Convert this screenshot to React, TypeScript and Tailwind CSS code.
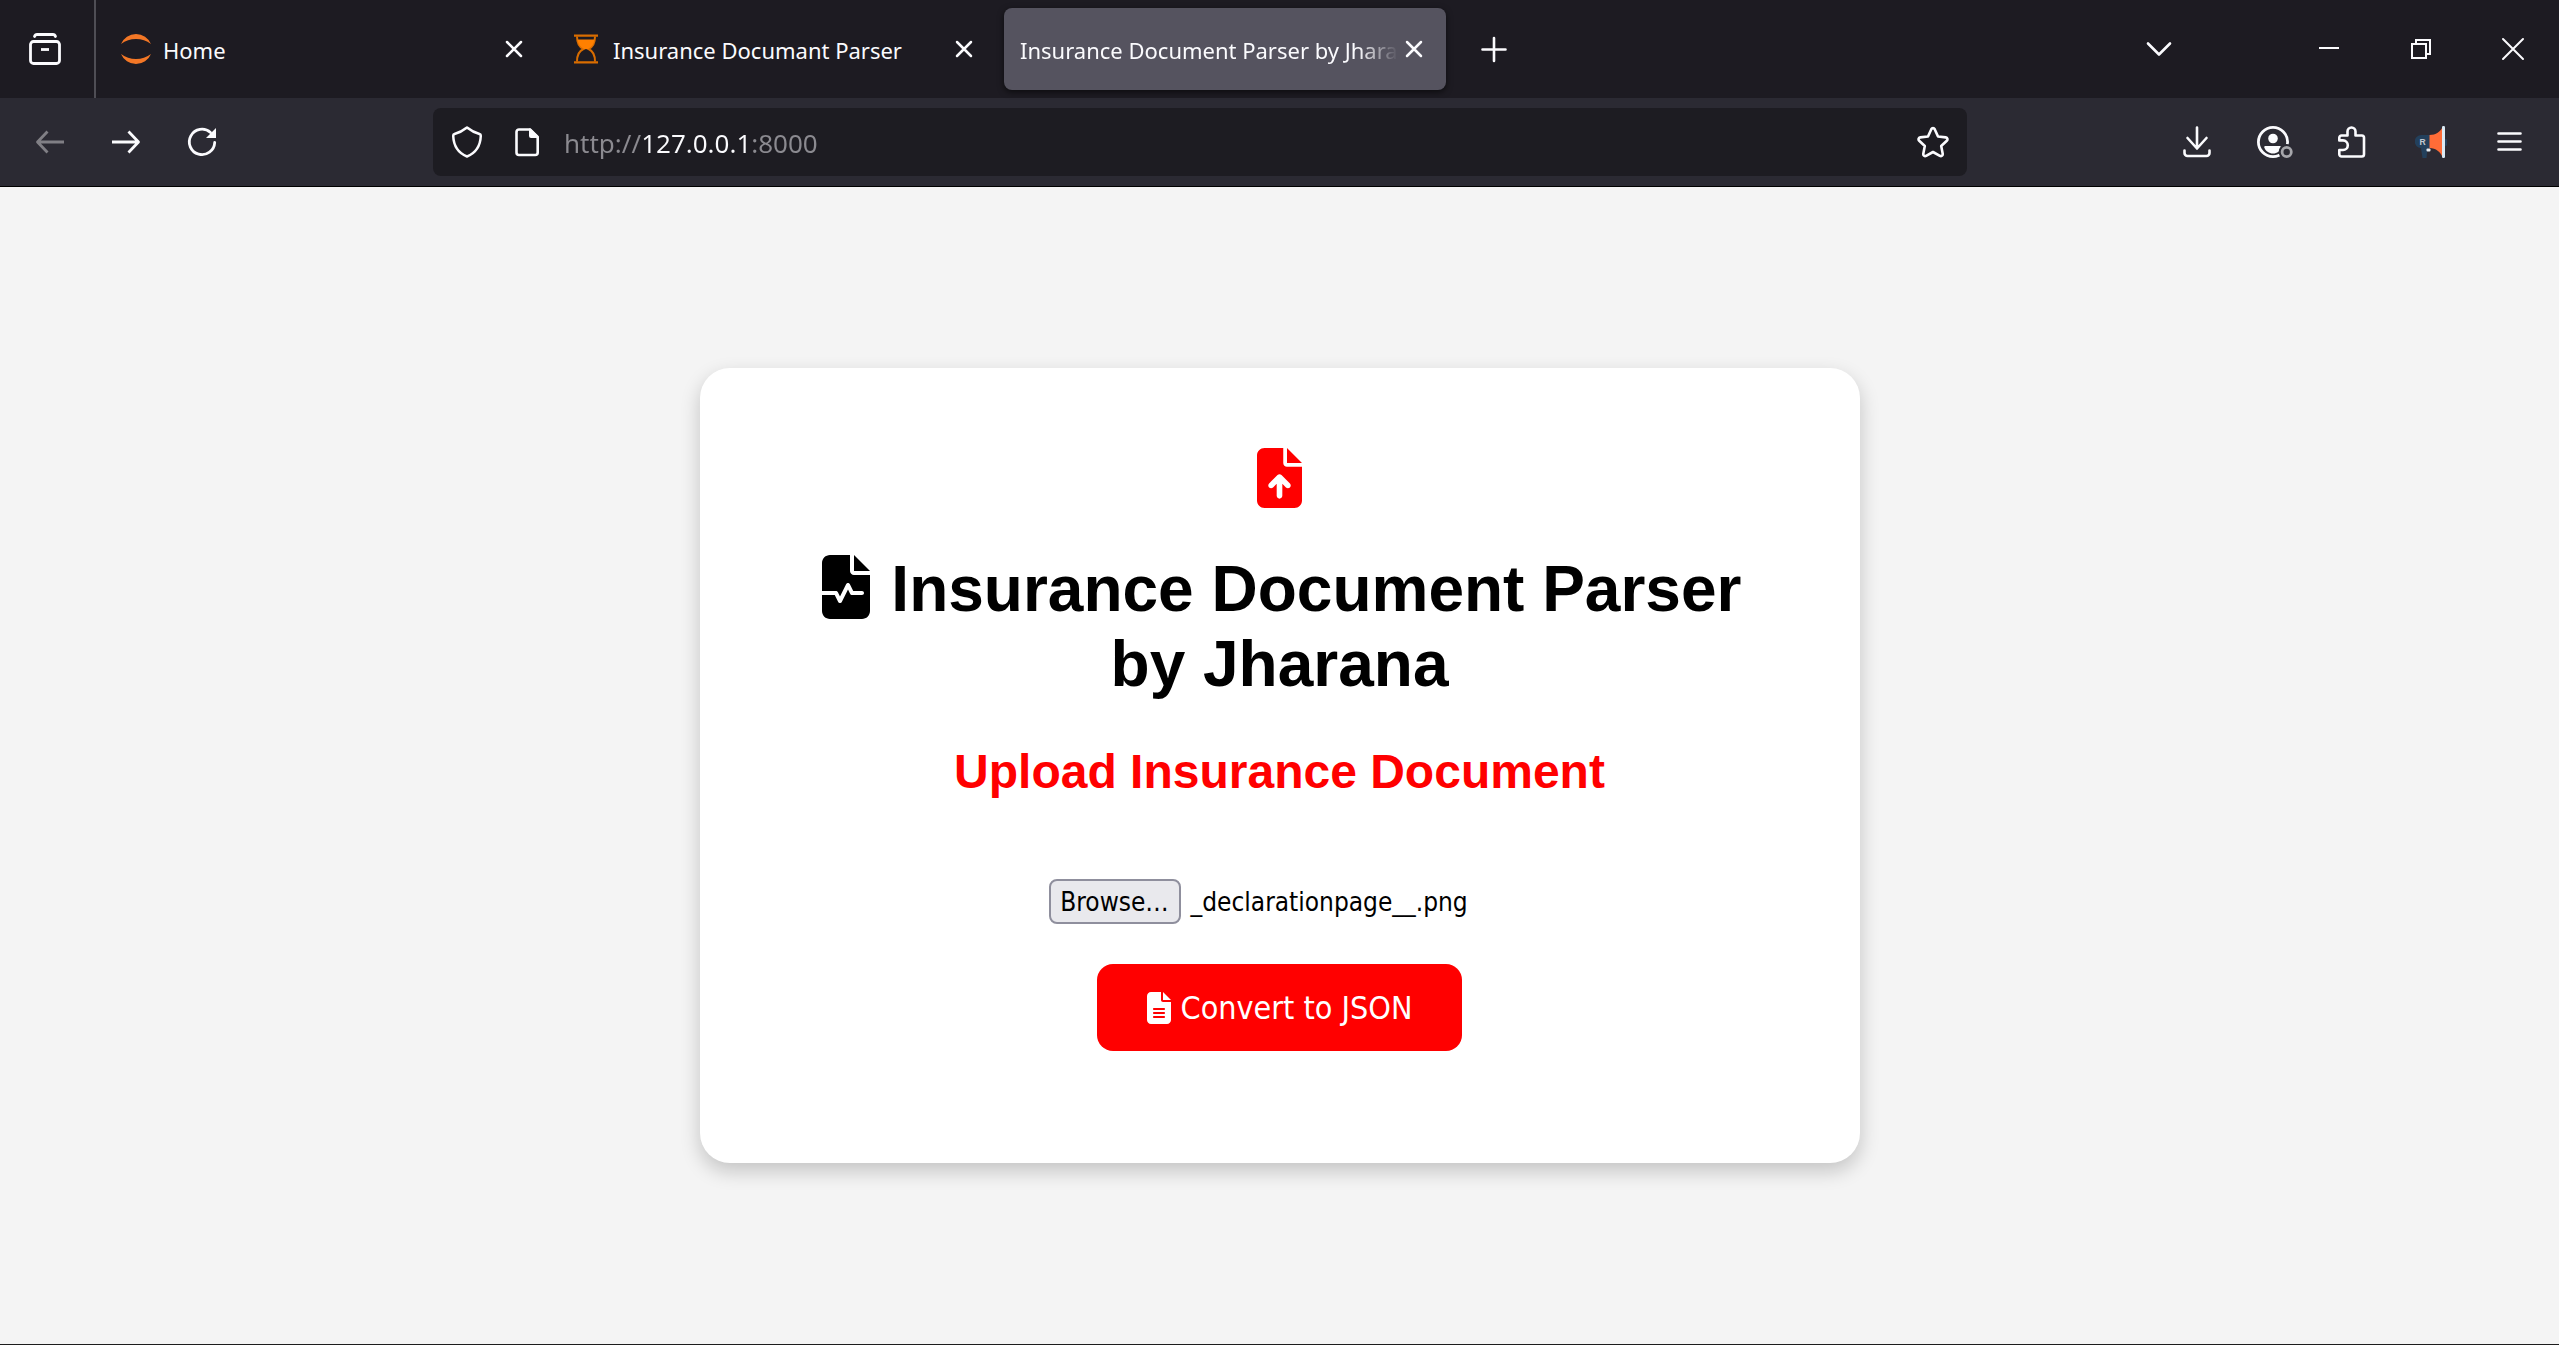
import type { ReactNode } from "react";
import { FaFileArrowUp, FaFileLines, FaFileWaveform } from "react-icons/fa6";

function Glyph({ children, className = "size-8" }: { children: ReactNode; className?: string }) {
  return (
    <svg
      viewBox="0 0 32 32"
      className={`${className} shrink-0`}
      fill="none"
      stroke="currentColor"
      strokeWidth="2.8"
      strokeLinecap="round"
      strokeLinejoin="round"
      aria-hidden="true"
    >
      {children}
    </svg>
  );
}

function CloseGlyph() {
  return (
    <Glyph>
      <path d="M9 9l14 14M23 9L9 23" strokeWidth="2.5" />
    </Glyph>
  );
}

function JupyterIcon() {
  return (
    <svg viewBox="0 0 32 32" className="size-8 shrink-0" fill="#f37726" aria-hidden="true">
      <path d="M1 11A16.2 16.2 0 0 1 31 11A25 25 0 0 0 1 11z" />
      <path d="M1 21A16.2 16.2 0 0 0 31 21A25 25 0 0 1 1 21z" />
    </svg>
  );
}

function HourglassIcon() {
  return (
    <svg viewBox="0 0 32 32" className="size-8 shrink-0" aria-hidden="true">
      <path d="M4 1.5h24v2.2H4zM4 28.3h24v2.2H4z" fill="#d96d00" />
      <path
        d="M7 3.5c0 7 2 10.500 6.500 12.500C9 18 7 22 7 28.500M25 3.500c0 7-2 10.500-6.500 12.500C23 18 25 22 25 28.500"
        fill="none"
        stroke="#d96d00"
        strokeWidth="2"
      />
      <path d="M7.500 6.500h17c-.5 4.500-2.500 7.500-6.500 9.500h-4c-4-2-6-5-6.500-9.500z" fill="#ff8000" />
    </svg>
  );
}

function MegaphoneIcon() {
  return (
    <svg viewBox="0 0 32 32" className="size-8 shrink-0" aria-hidden="true">
      <path d="M6.500 9H15v13h-2.500L11.500 32H7.500L6 22A6.500 6.500 0 0 1 6.500 9z" fill="#23405c" />
      <path d="M30 13a3.500 3.500 0 0 1 0 7z" fill="#23405c" />
      <path d="M14.500 9C21 9 25.500 5.500 27.500 1v30C25.500 26 21 22 14.500 22z" fill="#ff6c37" />
      <rect x="27" y="0" width="3" height="32" rx="1.200" fill="#dbe9f4" />
      <rect x="11.500" y="22.500" width="4" height="3" rx="1" fill="#e8eef4" />
      <text x="4.500" y="19" fontSize="8.500" fontWeight="700" fontFamily="Liberation Sans, sans-serif" fill="#c3c9d0">
        R
      </text>
    </svg>
  );
}

function Tab({ title, icon, active = false }: { title: string; icon?: ReactNode; active?: boolean }) {
  return (
    <div
      role="tab"
      aria-selected={active}
      className={
        active
          ? "flex h-[82px] w-[442px] min-w-0 items-center rounded-lg bg-[#55535f] pr-4 pl-4 shadow-[0_2px_6px_rgba(0,0,0,0.6)]"
          : "flex h-[82px] w-[442px] min-w-0 items-center rounded-lg pr-4 pl-4"
      }
    >
      {icon && <span className="mr-[11px]">{icon}</span>}
      <span
        className={
          active
            ? "min-w-0 flex-1 overflow-hidden pt-0.5 whitespace-nowrap [mask-image:linear-gradient(to_left,transparent,black_40px)]"
            : "min-w-0 flex-1 overflow-hidden pt-0.5 whitespace-nowrap"
        }
      >
        {title}
      </span>
      <button type="button" aria-label={`Close ${title}`}>
        <CloseGlyph />
      </button>
    </div>
  );
}

function ToolButton({ label, children, dim = false }: { label: string; children: ReactNode; dim?: boolean }) {
  return (
    <button
      type="button"
      aria-label={label}
      disabled={dim}
      className={
        dim
          ? "flex h-16 w-16 shrink-0 items-center justify-center text-[#807f85]"
          : "flex h-16 w-16 shrink-0 items-center justify-center"
      }
    >
      {children}
    </button>
  );
}

function WindowButton({ label, children }: { label: string; children: ReactNode }) {
  return (
    <button type="button" aria-label={label} className="flex h-full w-[92px] items-center justify-center">
      {children}
    </button>
  );
}

function TabStrip() {
  return (
    <div className="flex h-[98px] items-center bg-[#1d1b22] text-[22px] leading-8">
      <button
        type="button"
        aria-label="Recent browsing"
        className="flex h-full w-24 shrink-0 items-center justify-center border-r-2 border-[#4f4e55] pr-1"
      >
        <Glyph>
          <rect x="1.500" y="8.500" width="29" height="22" rx="3" />
          <path d="M5.500 3.500C6 2 7 1.500 8 1.500h16c1 0 2 .5 2.500 2" />
          <path d="M12 16.500h8" strokeLinecap="butt" />
        </Glyph>
      </button>
      <div role="tablist" className="ml-2 flex min-w-0 gap-2">
        <Tab title="Home" icon={<JupyterIcon />} />
        <Tab title="Insurance Documant Parser" icon={<HourglassIcon />} />
        <Tab title="Insurance Document Parser by Jharana" active />
      </div>
      <button type="button" aria-label="New tab" className="ml-4 flex h-16 w-16 shrink-0 items-center justify-center">
        <Glyph>
          <path d="M16 5v23M4.500 16.500h23" strokeWidth="2.600" />
        </Glyph>
      </button>
      <div className="ml-auto flex h-full shrink-0 items-center">
        <button type="button" aria-label="List all tabs" className="mr-[92px] flex h-16 w-16 items-center justify-center">
          <Glyph>
            <path d="M5 10.500l11 11 11-11" strokeWidth="2.600" />
          </Glyph>
        </button>
        <WindowButton label="Minimize">
          <Glyph>
            <path d="M6 15h20" strokeWidth="2" strokeLinecap="butt" />
          </Glyph>
        </WindowButton>
        <WindowButton label="Restore">
          <Glyph>
            <path d="M7 11h14v14H7zM11 11V7h14v14h-4" strokeWidth="2" strokeLinejoin="miter" strokeLinecap="butt" />
          </Glyph>
        </WindowButton>
        <WindowButton label="Close">
          <Glyph>
            <path d="M6 6l20 20M26 6L6 26" strokeWidth="2" />
          </Glyph>
        </WindowButton>
      </div>
    </div>
  );
}

function NavBar() {
  return (
    <div className="flex h-[89px] items-center border-b border-black bg-[#2b2a33] px-[18px]">
      <div className="flex shrink-0 gap-3">
        <ToolButton label="Back" dim>
          <Glyph>
            <path d="M30 16H3.500M13.500 5.500L3.500 16l10 10.500" strokeLinecap="butt" />
          </Glyph>
        </ToolButton>
        <ToolButton label="Forward">
          <Glyph>
            <path d="M2 16h26.500M18.500 5.500L28.500 16l-10 10.500" strokeLinecap="butt" />
          </Glyph>
        </ToolButton>
        <ToolButton label="Reload">
          <Glyph>
            <path d="M28.700 16.500A12.700 12.700 0 1 1 24.500 6.500" />
            <path d="M30 2v10H20z" fill="currentColor" stroke="none" />
          </Glyph>
        </ToolButton>
      </div>
      <div className="w-[199px]" />
      <div className="flex h-[68px] min-w-0 flex-1 items-center rounded-lg bg-[#1d1c22] px-[18px]">
        <button type="button" aria-label="Tracking protection">
          <Glyph>
            <path
              d="M16 1.500C12.500 4.300 8 6.700 3.500 8c-.9.3-1.300.9-1.300 1.800C2.600 19.500 7 27 16 30.500c9-3.500 13.400-11 13.800-20.700 0-.9-.4-1.500-1.300-1.800C24 6.700 19.500 4.300 16 1.500z"
              strokeWidth="2.500"
            />
          </Glyph>
        </button>
        <button type="button" aria-label="Site information" className="ml-7">
          <Glyph>
            <path d="M8 3.500h11L26.700 11v15.500a2.500 2.500 0 0 1-2.500 2.500H8a2.500 2.500 0 0 1-2.500-2.500V6A2.500 2.500 0 0 1 8 3.500z" strokeWidth="2.600" />
            <path d="M18 2.500h1.500l8 8V12H20a2 2 0 0 1-2-2z" fill="currentColor" stroke="none" />
          </Glyph>
        </button>
        <input
          type="text"
          aria-label="Address"
          defaultValue="http://127.0.0.1:8000"
          spellCheck={false}
          className="ml-[21px] min-w-0 flex-1 bg-[linear-gradient(to_right,#8b8a90_80px,#fbfbfe_80px_187px,#8b8a90_187px)] bg-clip-text pt-0.5 text-[26px] leading-9 text-transparent caret-white outline-none"
        />
        <button type="button" aria-label="Bookmark this page">
          <Glyph>
            <path
              d="M14.300 3.200a1.900 1.900 0 0 1 3.400 0L21 10.500l7.800.9a1.900 1.900 0 0 1 1 3.300L24.200 20l1.500 7.800a1.900 1.900 0 0 1-2.800 2L16 26l-6.900 3.800a1.900 1.900 0 0 1-2.800-2L7.800 20 2.200 14.700a1.900 1.900 0 0 1 1-3.300L11 10.500z"
              strokeWidth="2.600"
            />
          </Glyph>
        </button>
      </div>
      <div className="w-[198px]" />
      <div className="flex shrink-0 gap-[14px]">
        <ToolButton label="Downloads">
          <Glyph>
            <path d="M16 1.500V22M6.500 12L16 22.500 25.500 12M3.500 24.500v2.500a3 3 0 0 0 3 3h19a3 3 0 0 0 3-3v-2.500" strokeWidth="2.600" />
          </Glyph>
        </ToolButton>
        <ToolButton label="Account">
          <svg viewBox="0 0 36 32" className="h-8 w-9" fill="none" aria-hidden="true">
            <circle cx="16" cy="16" r="14.600" stroke="currentColor" strokeWidth="2.800" />
            <circle cx="16" cy="12.500" r="4.800" fill="currentColor" />
            <path d="M8.500 20h15c1 0 1.500.6 1.200 1.500C23.500 25 20 27.500 16 27.500S8.500 25 7.300 21.500C7 20.600 7.500 20 8.500 20z" fill="currentColor" />
            <circle cx="29.700" cy="26" r="8" fill="#2b2a33" />
            <circle cx="29.700" cy="26" r="4.600" stroke="#a6a6ab" strokeWidth="2.800" />
          </svg>
        </ToolButton>
        <ToolButton label="Extensions">
          <Glyph>
            <path
              d="M10.500 9.500V5.500a4 4 0 0 1 8 0v4h6.300a2.200 2.200 0 0 1 2.200 2.200v16.600a2.200 2.200 0 0 1-2.200 2.200H4.500a2.200 2.200 0 0 1-2.200-2.200V24H6a4.800 4.800 0 0 0 0-9.600H2.300v-2.700a2.200 2.200 0 0 1 2.200-2.200z"
              strokeWidth="2.600"
            />
          </Glyph>
        </ToolButton>
        <ToolButton label="Megaphone extension">
          <MegaphoneIcon />
        </ToolButton>
        <ToolButton label="Open application menu">
          <Glyph>
            <path d="M5.500 7.500h22M5.500 15.500h22M5.500 23.500h22" strokeWidth="2.600" />
          </Glyph>
        </ToolButton>
      </div>
    </div>
  );
}

function UploadCard() {
  return (
    <section className="flex w-full max-w-[1160px] flex-col items-center rounded-[30px] bg-white px-20 pt-20 pb-28 text-center font-['Liberation_Sans',Arial,sans-serif] shadow-[0_8px_20px_rgba(0,0,0,0.2)]">
      <FaFileArrowUp className="h-[60px] w-[45px] text-[#ff0000]" aria-hidden="true" />
      <h1 className="mt-11 text-[64px] leading-[75px] font-bold text-black">
        <FaFileWaveform className="inline-block h-16 w-14 align-[-0.125em]" aria-hidden="true" /> Insurance Document Parser by
        Jharana
      </h1>
      <h2 className="mt-[42px] text-[48px] leading-[56px] font-bold text-[#ff0000]">Upload Insurance Document</h2>
      <form
        className="mt-[79px] flex flex-col items-center font-['DejaVu_Sans_Condensed','DejaVu_Sans',sans-serif]"
        onSubmit={(e) => e.preventDefault()}
      >
        <div className="flex w-[462px] items-center text-[26px] leading-9 text-black">
          <input id="document" type="file" className="peer sr-only" />
          <label
            htmlFor="document"
            className="flex h-[45px] w-[132px] items-center justify-center rounded-lg border-2 border-[#8f8f9d] bg-[#e9e9ed]"
          >
            Browse…
          </label>
          <span className="ml-2.5">_declarationpage__.png</span>
        </div>
        <button
          type="submit"
          className="mt-10 flex h-[87px] items-center gap-2.5 rounded-2xl bg-[#ff0000] px-[50px] text-[32px] leading-10 text-white"
        >
          <FaFileLines className="h-8 w-6" aria-hidden="true" />
          Convert to JSON
        </button>
      </form>
    </section>
  );
}

export default function App() {
  return (
    <div className="flex min-h-screen flex-col bg-[#f4f4f4] font-['Noto_Sans','Open_Sans',sans-serif]">
      <header className="text-[#fbfbfe]">
        <TabStrip />
        <NavBar />
      </header>
      <main className="flex flex-1 items-center justify-center border-b border-[#1d1d1d]">
        <UploadCard />
      </main>
    </div>
  );
}
